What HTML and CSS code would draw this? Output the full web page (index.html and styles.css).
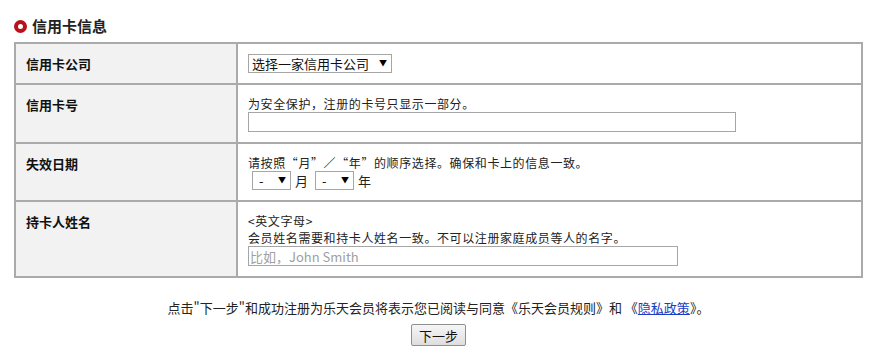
FILE: index.html
```html
<!DOCTYPE html>
<html lang="zh-CN">
<head>
    <meta charset="UTF-8">
    <title>信用卡信息</title>
    <link rel="stylesheet" href="styles.css">
</head>
<body>
    <div class="page">
        <h2 class="section-title"><span class="dot"></span>信用卡信息</h2>

        <table class="card-table">
            <tr>
                <th>信用卡公司</th>
                <td>
                    <span class="select-wrap">
                        <select class="company"><option>选择一家信用卡公司</option></select>
                    </span>
                </td>
            </tr>
            <tr>
                <th>信用卡号</th>
                <td>
                    <p class="note">为安全保护，注册的卡号只显示一部分。</p>
                    <input type="text" class="card-number">
                </td>
            </tr>
            <tr>
                <th>失效日期</th>
                <td>
                    <p class="note">请按照“月”／“年”的顺序选择。确保和卡上的信息一致。</p>
                    <div class="expire">
                        <span class="select-wrap"><select class="small"><option>-</option></select></span>
                        <span class="unit">月</span>
                        <span class="select-wrap"><select class="small"><option>-</option></select></span>
                        <span class="unit">年</span>
                    </div>
                </td>
            </tr>
            <tr>
                <th>持卡人姓名</th>
                <td>
                    <p class="note">&lt;英文字母&gt;</p>
                    <p class="note">会员姓名需要和持卡人姓名一致。不可以注册家庭成员等人的名字。</p>
                    <input type="text" class="holder" placeholder="比如，John Smith">
                </td>
            </tr>
        </table>

        <p class="agree">点击"下一步"和成功注册为乐天会员将表示您已阅读与同意《乐天会员规则》和 《<a href="#">隐私政策</a>》。</p>
        <div class="actions">
            <button type="button">下一步</button>
        </div>
    </div>
</body>
</html>
```

FILE: styles.css
```css
body {
    margin: 0;
    font-family: "Noto Sans CJK SC", "Liberation Sans", sans-serif;
    font-size: 13px;
    color: #222;
    background: #fff;
}

.page {
    padding: 19px 18px 0 14px;
}

.section-title {
    display: flex;
    align-items: center;
    margin: 0 0 9px;
    font-size: 15px;
    line-height: 14px;
    font-weight: bold;
    color: #222;
}

.dot {
    width: 5px;
    height: 5px;
    border: 4px solid #b5121b;
    border-radius: 50%;
    margin-right: 5px;
    background: #fff;
}

.card-table {
    width: 100%;
    border-collapse: collapse;
    border: 2px solid #aaa;
}

.card-table th,
.card-table td {
    border: 2px solid #aaa;
    padding: 10px;
    vertical-align: top;
    text-align: left;
    line-height: 17px;
}

.card-table th {
    width: 200px;
    background: #f2f2f2;
    font-size: 13px;
    font-weight: bold;
    color: #111;
    padding-top: 11px;
}

.note {
    margin: 0;
    font-size: 12px;
    line-height: 17px;
    letter-spacing: 0.6px;
}

.select-wrap {
    position: relative;
    display: inline-block;
    vertical-align: top;
}

.select-wrap::after {
    content: "▼";
    position: absolute;
    right: 5px;
    top: 3px;
    font-size: 8px;
    line-height: 12px;
    color: #000;
    pointer-events: none;
}

select {
    appearance: none;
    -webkit-appearance: none;
    height: 19px;
    border: 1px solid #a6a6a6;
    border-radius: 0;
    background: #fff;
    font-family: inherit;
    font-size: 13px;
    color: #111;
    padding: 0 16px 0 3px;
    margin: 0;
    line-height: 17px;
}

select.company {
    width: 144px;
}

select.small {
    width: 39px;
    padding-left: 6px;
}

.expire {
    display: flex;
    align-items: center;
    padding-left: 4px;
    height: 19px;
}

.unit {
    margin: 0 7px 0 4px;
}

input[type="text"] {
    display: block;
    height: 20px;
    box-sizing: border-box;
    border: 1px solid #a6a6a6;
    padding: 0 1px;
    margin: 0;
    font-family: inherit;
    font-size: 13px;
}

.card-number {
    width: 488px;
}

.holder {
    width: 430px;
}

.holder::placeholder {
    color: #a0a0a0;
}

.agree {
    text-align: center;
    margin: 22px 0 8px;
    line-height: 16px;
}

.agree a {
    color: #1a3cc7;
    text-decoration: underline;
}

.actions {
    text-align: center;
}

button {
    height: 22px;
    padding: 0 7px;
    border: 1px solid #8f8f8f;
    border-radius: 2px;
    background: linear-gradient(#f6f6f6, #dedede);
    font-family: inherit;
    font-size: 13px;
    color: #111;
    cursor: pointer;
}
```
